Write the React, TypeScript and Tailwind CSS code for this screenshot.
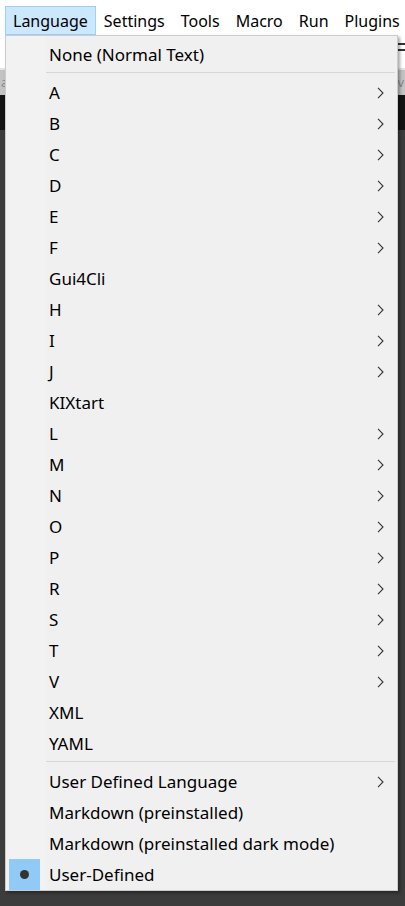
import React from 'react';

type Item = { label: string; sub?: boolean; checked?: boolean } | { sep: true };

const items: Item[] = [
  { label: 'None (Normal Text)' },
  { sep: true },
  { label: 'A', sub: true },
  { label: 'B', sub: true },
  { label: 'C', sub: true },
  { label: 'D', sub: true },
  { label: 'E', sub: true },
  { label: 'F', sub: true },
  { label: 'Gui4Cli' },
  { label: 'H', sub: true },
  { label: 'I', sub: true },
  { label: 'J', sub: true },
  { label: 'KIXtart' },
  { label: 'L', sub: true },
  { label: 'M', sub: true },
  { label: 'N', sub: true },
  { label: 'O', sub: true },
  { label: 'P', sub: true },
  { label: 'R', sub: true },
  { label: 'S', sub: true },
  { label: 'T', sub: true },
  { label: 'V', sub: true },
  { label: 'XML' },
  { label: 'YAML' },
  { sep: true },
  { label: 'User Defined Language', sub: true },
  { label: 'Markdown (preinstalled)' },
  { label: 'Markdown (preinstalled dark mode)' },
  { label: 'User-Defined', checked: true },
];

const menus = ['Language', 'Settings', 'Tools', 'Macro', 'Run', 'Plugins'];

function Chevron() {
  return (
    <svg width="7" height="12" viewBox="0 0 7 12" className="shrink-0">
      <polyline points="1,0.8 6,6 1,11.2" fill="none" stroke="#333" strokeWidth="1.1" />
    </svg>
  );
}

export default function App() {
  return (
    <div className="relative w-[405px] h-[906px] overflow-hidden bg-[#3c3c3c] font-['Noto_Sans',sans-serif] text-[16px] text-black">
      {/* menubar */}
      <div className="h-[35px] bg-white flex items-start pl-[5px] pt-[6px] whitespace-nowrap">
        {menus.map((m, i) => (
          <div
            key={m}
            className={
              i === 0
                ? 'h-[29px] px-[7px] flex items-center border border-[#99d1ff] bg-[#cce8ff]'
                : 'h-[29px] px-[7px] flex items-center border border-transparent'
            }
          >
            {m}
          </div>
        ))}
      </div>
      {/* toolbar */}
      <div className="h-[35px] bg-white border-b-2 border-[#e4e4e4] flex flex-col gap-[4px] pt-[8px] items-end">
        <div className="w-[8px] h-[2px] bg-[#333]" />
        <div className="w-[8px] h-[2px] bg-[#333]" />
      </div>
      {/* tab bar */}
      <div className="h-[25px] bg-[#c3c3c3] flex items-center justify-between px-[1px] text-[13px] text-[#8a8a8a]">
        <span>as</span>
        <span>iv</span>
      </div>
      <div className="h-[35px] bg-[#141414]" />

      {/* dropdown */}
      <div className="absolute left-[5px] top-[35px] w-[393px] h-[856px] border border-[#cccccc] bg-[#f0f0f0] shadow-[2px_2px_3px_rgba(0,0,0,0.35)] flex text-[17px]">
        <div className="w-[40px] bg-[#f2f2f2] shrink-0" />
        <div className="flex-1 pt-[3px]">
          {items.map((it, i) =>
            'sep' in it ? (
              <div key={i} className="h-[7px] pt-[2px] pr-[2px]">
                <div className="h-[1px] bg-[#d7d7d7]" />
              </div>
            ) : (
              <div key={i} className="relative h-[31px] flex items-center pl-[3px] pr-[13px]">
                {it.checked && (
                  <div className="absolute left-[-37px] top-0 w-[31px] h-[31px] bg-[#91c9f7] flex items-center justify-center">
                    <div className="w-[9px] h-[9px] rounded-full bg-[#333]" />
                  </div>
                )}
                <span className="flex-1 whitespace-nowrap">{it.label}</span>
                {it.sub && <Chevron />}
              </div>
            )
          )}
        </div>
      </div>
    </div>
  );
}
